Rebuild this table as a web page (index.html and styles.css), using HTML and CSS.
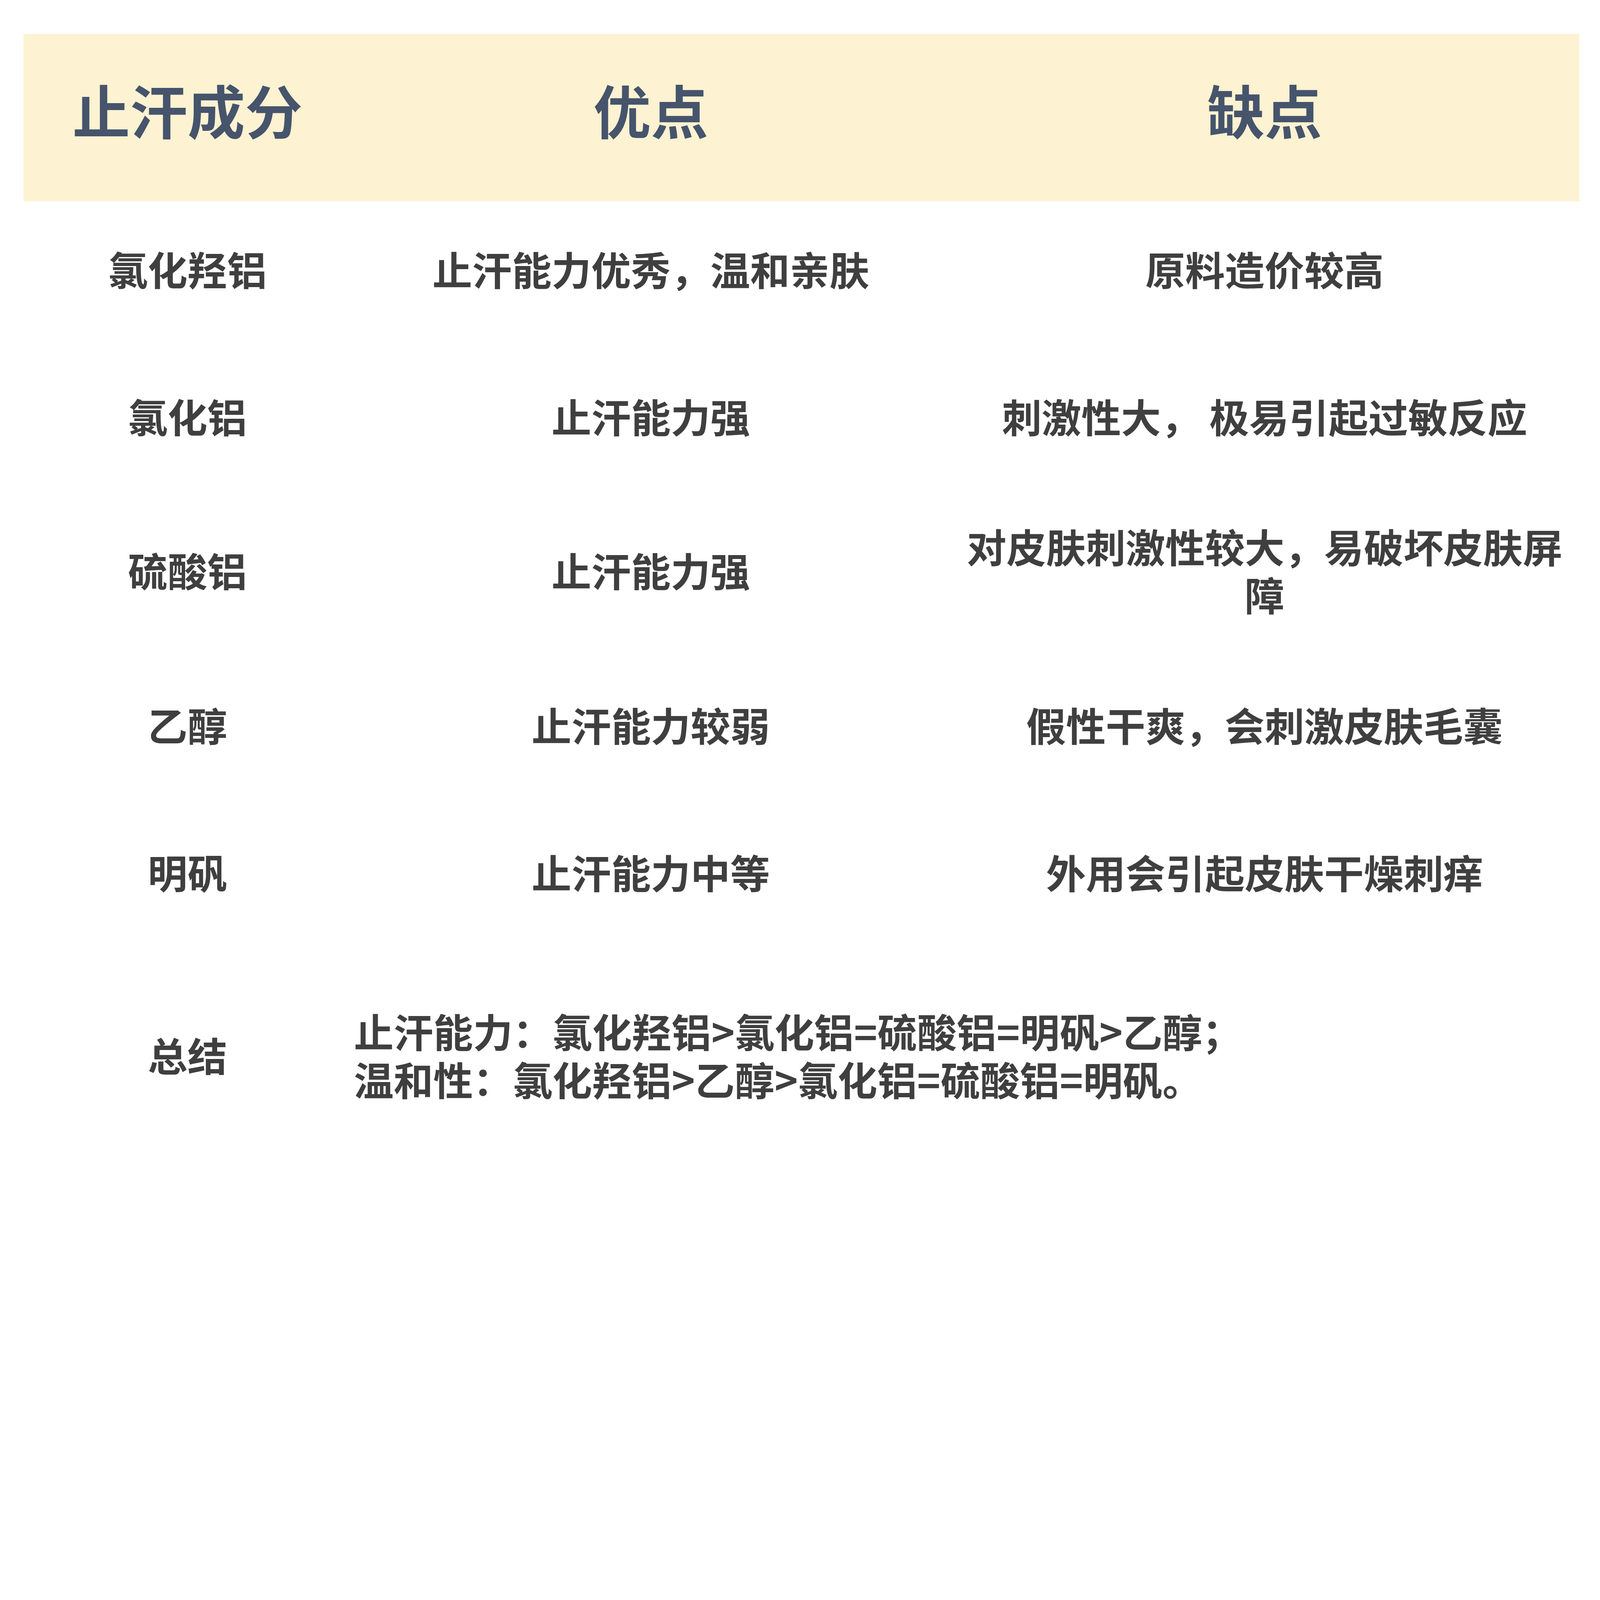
FILE: index.html
```html
<!DOCTYPE html>
<html lang="zh-CN">
<head>
<meta charset="utf-8">
<title>止汗成分对比</title>
<link rel="stylesheet" href="styles.css">
</head>
<body>
<div class="sheet">
  <div class="head">
    <div class="hc">止汗成分</div>
    <div class="hc">优点</div>
    <div class="hc">缺点</div>
  </div>
  <div class="row r1">
    <div class="c">氯化羟铝</div>
    <div class="c">止汗能力优秀，温和亲肤</div>
    <div class="c">原料造价较高</div>
  </div>
  <div class="row r2">
    <div class="c">氯化铝</div>
    <div class="c">止汗能力强</div>
    <div class="c">刺激性大， 极易引起过敏反应</div>
  </div>
  <div class="row r3">
    <div class="c">硫酸铝</div>
    <div class="c">止汗能力强</div>
    <div class="c">对皮肤刺激性较大，易破坏皮肤屏障</div>
  </div>
  <div class="row r4">
    <div class="c">乙醇</div>
    <div class="c">止汗能力较弱</div>
    <div class="c">假性干爽，会刺激皮肤毛囊</div>
  </div>
  <div class="row r5">
    <div class="c">明矾</div>
    <div class="c">止汗能力中等</div>
    <div class="c">外用会引起皮肤干燥刺痒</div>
  </div>
  <div class="row r6">
    <div class="c">总结</div>
    <div class="c sum">止汗能力：氯化羟铝&gt;氯化铝=硫酸铝=明矾&gt;乙醇；<br>温和性：氯化羟铝&gt;乙醇&gt;氯化铝=硫酸铝=明矾。</div>
  </div>
</div>
</body>
</html>
```

FILE: styles.css
```css
:root {
  /* one unit = one pixel of the 5760px-wide design */
  --u: calc(100vw / 5760);
}

html, body {
  margin: 0;
  padding: 0;
  background: #ffffff;
  overflow: hidden;
}

body {
  font-family: "Noto Sans CJK SC", "Noto Sans", sans-serif;
  font-weight: 700;
  color: #3f3f3f;
}

.sheet {
  margin: calc(123 * var(--u)) 0 0 calc(84 * var(--u));
  width: calc(5601 * var(--u));
}

.head,
.row {
  display: grid;
  grid-template-columns: calc(1182 * var(--u)) calc(2154 * var(--u)) calc(2265 * var(--u));
}

.head {
  height: calc(601 * var(--u));
  box-sizing: border-box;
  padding-top: calc(146 * var(--u));
  background: #fdf2d1;
  align-items: start;
}

.hc {
  font-size: calc(207 * var(--u));
  line-height: calc(247 * var(--u));
  color: #46546c;
  text-align: center;
}

.row {
  align-items: center;
}

.c {
  font-size: calc(143 * var(--u));
  line-height: calc(173 * var(--u));
  text-align: center;
  padding: 0 calc(10 * var(--u));
}

.r1 { height: calc(484 * var(--u)); }
.r2 { height: calc(576 * var(--u)); }
.r3 { height: calc(532 * var(--u)); }
.r4 { height: calc(582 * var(--u)); }
.r5 { height: calc(478 * var(--u)); }
.r6 { height: calc(838 * var(--u)); }

.sum {
  grid-column: 2 / 4;
  text-align: left;
  padding-left: calc(8 * var(--u));
}
```
